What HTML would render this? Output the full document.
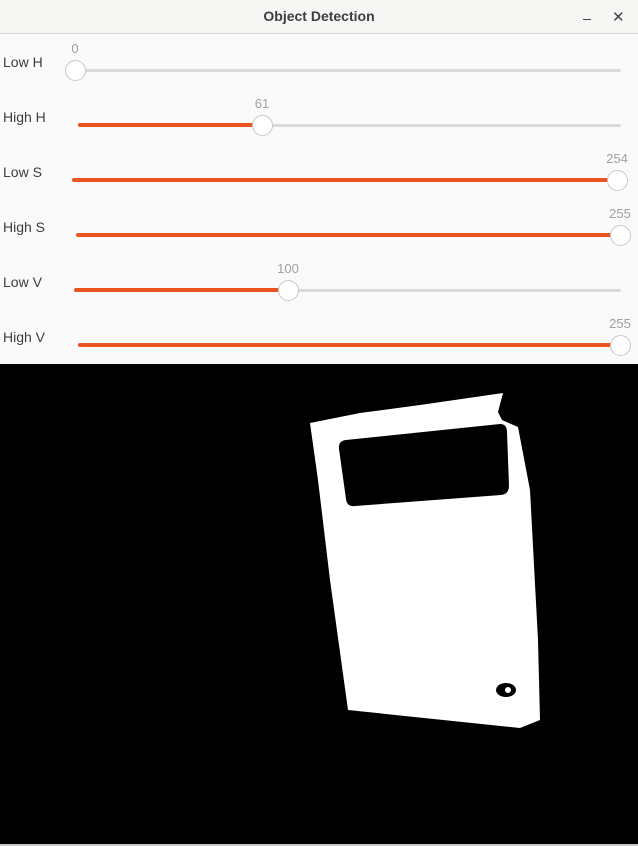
<!DOCTYPE html>
<html><head><style>
body{margin:0;width:638px;height:846px;overflow:hidden;background:#000;font-family:"Liberation Sans",sans-serif;position:relative}
#tb{position:absolute;left:0;top:0;width:638px;height:33px;background:#f6f6f5;border-bottom:1px solid #d6d6d6}
#tb .t{position:absolute;left:0;width:638px;top:8px;text-align:center;font-weight:bold;font-size:14px;color:#3d3d3d}
#panel{position:absolute;left:0;top:34px;width:638px;height:330px;background:#fafafa}
.lbl{position:absolute;left:3px;font-size:14px;color:#3d3d3d}
.tr{position:absolute;height:3px;background:#dadada;border-radius:2px}
.fl{position:absolute;height:4px;background:#e95420;border-radius:2px}
.h{position:absolute;width:19px;height:19px;border-radius:50%;background:#fff;border:1px solid #c8c8c8}
.v{position:absolute;font-size:13px;color:#a0a0a0;width:40px;text-align:center}
</style></head><body>
<div id="tb"><div class="t">Object Detection</div>
<div style="position:absolute;left:583px;top:19px;width:8px;height:1px;background:#444"></div>
<div style="position:absolute;left:612px;top:8px;font-size:15px;color:#444">✕</div></div>
<div id="panel"></div>
<div id="s"></div>
<script>
var rows=[["Low H",75,75,"0"],["High H",78,262,"61"],["Low S",72,617,"254"],["High S",76,620,"255"],["Low V",74,288,"100"],["High V",78,620,"255"]];
var h="";rows.forEach(function(r,i){var y=70+55*i;
h+='<div class="lbl" style="top:'+(y-16)+'px">'+r[0]+'</div>';
h+='<div class="tr" style="left:'+r[1]+'px;width:'+(621-r[1])+'px;top:'+(y-1)+'px"></div>';
if(r[2]>r[1]+2)h+='<div class="fl" style="left:'+r[1]+'px;width:'+(r[2]-r[1])+'px;top:'+(y-2)+'px"></div>';
h+='<div class="h" style="left:'+(r[2]-10)+'px;top:'+(y-10)+'px"></div>';
h+='<div class="v" style="left:'+(r[2]-20)+'px;top:'+(y-29)+'px">'+r[3]+'</div>';});
document.getElementById("s").innerHTML=h;
</script>
<svg style="position:absolute;left:0;top:0" width="638" height="846">
<polygon fill="#fff" points="310,423 360,413 420,405 503,393 498,412 502,420 518,427 530,490 538,640 540,720 520,728 348,710 330,580 318,480"/>
<path fill="#000" d="M346,440 L500,424 Q507,424 507,432 L509,486 Q509,494 501,495 L355,506 Q347,507 346,499 L339,449 Q338,441 346,440Z"/>
<ellipse cx="506" cy="690" rx="10" ry="7" fill="#000"/>
<circle cx="508" cy="690" r="3" fill="#fff"/>
<rect x="0" y="844" width="638" height="2" fill="#c8c8c8"/>
</svg>
</body></html>
